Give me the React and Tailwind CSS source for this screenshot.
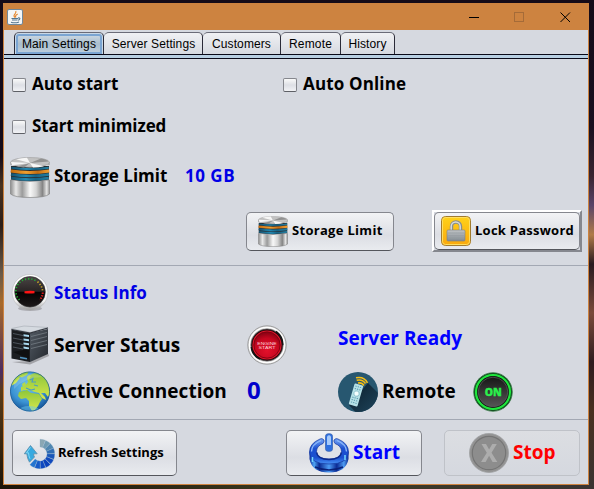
import React from 'react';

const heading = "font-['Open_Sans'] font-bold leading-none whitespace-nowrap";

function Checkbox() {
  return (
    <span className="block h-[14px] w-[14px] shrink-0 rounded-[2px] border border-[#85878d] border-b-[#5e6066] bg-linear-to-b from-[#fafafa] via-[#dddfe5] to-[#f1f2f5]" />
  );
}

function Option({ label, className }) {
  return (
    <label className="flex items-center gap-[6px]">
      <Checkbox />
      <span className={`${heading} relative -top-0.5 text-[17px] text-black ${className}`}>{label}</span>
    </label>
  );
}

function Tab({ label, width, active, className = '' }) {
  return (
    <div
      className={`h-[22px] shrink-0 rounded-t-[5px] border border-b-0 border-[#2b2b38] border-t-[#6b6c78] ${width} ${
        active ? 'bg-[#c9d8e6] p-px pb-0' : 'border-l-0 bg-linear-to-b from-[#f0f1f4] to-[#d6d9e0]'
      }`}
    >
      <div
        className={`flex h-full items-center justify-center whitespace-nowrap font-['Liberation_Sans'] text-[12px] leading-none text-black ${className} ${
          active
            ? 'rounded-t-[3px] border-2 border-[#7ba5d2] bg-linear-to-b from-[#c8d5e0] via-[#a9bdcd] to-[#bccddb]'
            : ''
        }`}
      >
        {label}
      </div>
    </div>
  );
}

function JavaIcon() {
  return (
    <svg className="h-4 w-4" viewBox="0 0 16 16">
      <rect x=".5" y=".5" width="15" height="15" rx="1.5" fill="#f3f5f6" stroke="#71889a" />
      <path d="M8.2 8.5C4.7 6 10 5 8.800 2M9 8.500C7.700 6.800 9.200 6 10.800 5" fill="none" stroke="#e5852b" strokeWidth="1.1" />
      <path d="M4.500 9.500h6.500M5 11h5.500M4 13.200q4 1.300 8-.3M11 9c2.600-.6 2.400 2 0 2.200" fill="none" stroke="#54758e" strokeWidth="1.1" />
    </svg>
  );
}

function Database({ id, className }) {
  return (
    <svg className={className} viewBox="0 0 40 41" preserveAspectRatio="none">
      <defs>
        <linearGradient id={`${id}m`}>
          <stop offset="0" stopColor="#8d8d8d" />
          <stop offset=".14" stopColor="#e8e8e8" />
          <stop offset=".3" stopColor="#9a9a9a" />
          <stop offset=".5" stopColor="#f8f8f8" />
          <stop offset=".66" stopColor="#d4d4d4" />
          <stop offset=".82" stopColor="#858585" />
          <stop offset=".93" stopColor="#e5e5e5" />
          <stop offset="1" stopColor="#909090" />
        </linearGradient>
        <linearGradient id={`${id}b`}>
          <stop offset="0" stopColor="#145170" />
          <stop offset=".4" stopColor="#2389b2" />
          <stop offset=".65" stopColor="#176385" />
          <stop offset="1" stopColor="#2480a3" />
        </linearGradient>
        <linearGradient id={`${id}o`}>
          <stop offset="0" stopColor="#c56a0c" />
          <stop offset=".4" stopColor="#f0a030" />
          <stop offset=".7" stopColor="#c46d12" />
          <stop offset="1" stopColor="#f2a133" />
        </linearGradient>
      </defs>
      <path d="M.5 23q19.500 3 39 0v14q-4 3.500-19.500 3.500T.5 37z" fill={`url(#${id}m)`} stroke="#858585" strokeWidth=".7" />
      <path d="M1 9h38v13.500q-19 3-38 0z" fill="#272d31" />
      <path d="M1.200 10.800q18.800 2.500 37.600 0" fill="none" stroke={`url(#${id}b)`} strokeWidth="2" />
      <path d="M.7 14q19.300 3 38.600 0" fill="none" stroke={`url(#${id}o)`} strokeWidth="2.800" />
      <path d="M.9 17.600q19.100 3 38.200 0M1.200 21q18.800 3 37.600 0" fill="none" stroke={`url(#${id}b)`} strokeWidth="2.500" />
      <path d="M.5 5v3q19.500 4.500 39 0V5z" fill={`url(#${id}m)`} />
      <ellipse cx="20" cy="5.300" rx="19.500" ry="4.800" fill="#c2c2c2" stroke="#a0a0a0" strokeWidth=".6" />
      <path d="M20 6 6 2.200Q12 .8 17 .7zM20 6l14 3.300q-5 1.200-11 1.200zM20 6 2 8.200 1 5z" fill="#f6f6f6" />
      <path d="M20 6 31 1.600q6 1 7.500 3zM20 6 7 9.600l7 .8z" fill="#919191" />
    </svg>
  );
}

function PadlockIcon() {
  return (
    <svg className="h-[30px] w-[30px] shrink-0" viewBox="0 0 30 30">
      <defs>
        <linearGradient id="gold" x2="0" y2="1">
          <stop stopColor="#ffd21a" />
          <stop offset="1" stopColor="#fba80c" />
        </linearGradient>
        <linearGradient id="steel" x2="0" y2="1">
          <stop stopColor="#bfc3c5" />
          <stop offset="1" stopColor="#838b92" />
        </linearGradient>
      </defs>
      <rect x=".5" y=".5" width="29" height="29" rx="4" fill="url(#gold)" stroke="#a17b2e" />
      <rect x="1.500" y="1.500" width="27" height="27" rx="3" fill="none" stroke="#ffdf62" />
      <path d="M10.500 15v-4.500a4.500 4.500 0 0 1 9 0V15" fill="none" stroke="#888d8e" strokeWidth="3.400" />
      <path d="M10.200 15v-4.500a4.500 4.500 0 0 1 9 0V15" fill="none" stroke="#d9dcd9" strokeWidth="1.500" />
      <rect x="6" y="14" width="18" height="11" rx="1" fill="url(#steel)" stroke="#81827e" strokeWidth=".6" />
      <path d="M7 17h16M7 19.500h16M7 22h16" stroke="#969da2" strokeWidth=".7" />
    </svg>
  );
}

function GaugeIcon() {
  return (
    <svg className="h-[38px] w-[38px] shrink-0" viewBox="0 0 38 38">
      <defs>
        <linearGradient id="rim" x2="0" y2="1">
          <stop stopColor="#fff" />
          <stop offset=".75" stopColor="#f1f1f1" />
          <stop offset="1" stopColor="#9a9a9a" />
        </linearGradient>
        <linearGradient id="dial" x2="0" y2="1">
          <stop stopColor="#4a4545" />
          <stop offset=".48" stopColor="#2a2525" />
          <stop offset=".52" stopColor="#050404" />
          <stop offset="1" stopColor="#1e1919" />
        </linearGradient>
      </defs>
      <ellipse cx="19" cy="34.500" rx="12" ry="2.500" fill="#8f9095" opacity=".6" />
      <circle cx="19" cy="18.300" r="17.900" fill="url(#rim)" stroke="#b0b0b3" strokeWidth=".5" />
      <circle cx="19" cy="17.800" r="15.300" fill="url(#dial)" stroke="#333" strokeWidth=".6" />
      <path d="M8.500 26A13 12.500 0 0 1 25.500 7.200" fill="none" stroke="#25ac35" strokeWidth="1.700" strokeDasharray="1.300 1.900" />
      <path d="M26.500 7.700Q31.500 12 31.700 18" fill="none" stroke="#c9a525" strokeWidth="1.700" strokeDasharray="1.300 1.700" />
      <path d="M31.700 18.500q0 4-3 7.500" fill="none" stroke="#f02020" strokeWidth="2" strokeDasharray="1.300 1.400" />
      <path d="M13.500 17.300q5-1 10-.2v2.200q-5 .5-10 0z" fill="#ff1414" />
    </svg>
  );
}

function ServerIcon() {
  return (
    <svg className="h-10 w-10 shrink-0" viewBox="0 0 40 40">
      <defs>
        <linearGradient id="side" x2="1" y2="1">
          <stop stopColor="#535b64" />
          <stop offset="1" stopColor="#24282e" />
        </linearGradient>
      </defs>
      <path d="M18 36 38 28l1 3-19 8.500L2 37z" fill="#a2a3a8" />
      <path d="M1.500 4.500 20 8v29L1.500 33.500z" fill="#1b1d21" />
      <path d="M20 8 38 4v25l-18 8z" fill="url(#side)" />
      <path d="M1.500 3.500 14 1l24 1.500L20 7.500z" fill="#d5dae0" stroke="#aab0b8" strokeWidth=".7" />
      <path d="m1.500 4.500 18.500 3.700 18-5.200" fill="none" stroke="#34383f" strokeWidth="1.200" />
      <path d="M3 8.500 13 10.500M3 13l10 2M3 17.500l10 2M3 22l10 2" stroke="#4c535c" strokeWidth="1" />
      <path d="m21 11.500 16-4M21 15.500l16-4M21 19.500l16-4M21 23.500l16-4" stroke="#7d858d" strokeWidth=".7" />
      <path d="m13.500 9.300 5.500.8v2l-5.500-.8zM13.500 13.400l5.500.8v2l-5.500-.8zM13.500 17.500l5.500.8v2l-5.500-.8zM13.500 21.600l5.500.8v2l-5.500-.8z" fill="#a9d8ef" />
      <path d="M3 27 19 24v10z" fill="#0a0b0d" opacity=".7" />
      <path d="m10 32.500 7 1.300" stroke="#5295c2" strokeWidth="1.500" />
    </svg>
  );
}

function GlobeIcon() {
  return (
    <svg className="h-[41px] w-10 shrink-0" viewBox="0 0 40 41">
      <defs>
        <radialGradient id="sea" cx=".45" cy=".35" r=".65">
          <stop stopColor="#6fc3ec" />
          <stop offset=".65" stopColor="#3b93d3" />
          <stop offset="1" stopColor="#145398" />
        </radialGradient>
        <linearGradient id="land" x2="0" y2="1">
          <stop stopColor="#8dc63a" />
          <stop offset="1" stopColor="#d7e84c" />
        </linearGradient>
        <clipPath id="sphere"><circle cx="20" cy="20.500" r="20" /></clipPath>
      </defs>
      <g clipPath="url(#sphere)">
        <circle cx="20" cy="20.500" r="20" fill="url(#sea)" />
        <path d="M12 1.500 19 0l-2 4-5 2.500-4-1zM3 9l5-4 2 2-4 5-5 3z" fill="url(#land)" />
        <path d="M20 4q9-6 18 6l2 12-2 4-3-4-4 0 4 4 1 3-4-2-3-5-4-1-3-1-3-1-5 0-3 1 0-4 4-1 3-4-1-3z" fill="url(#land)" />
        <path d="m9 21 8-2 4 3 8 1 3 5-2 3-2 4-3 4-3 1-3-5v-5l-3-3-5 1-3-3z" fill="url(#land)" />
        <path d="M12 13l3-2 1 3-3 3zM17 6l2-2 2 1-3 5z" fill="#b2d94a" />
        <path d="m20 9 3-2-1 4h4M16 17l5 2 4-1M24 14l4 1" fill="none" stroke="#4f9dbd" strokeWidth="1.200" />
        <ellipse cx="19" cy="39" rx="10" ry="4" fill="#68c8ef" opacity=".5" />
        <path d="M4 12Q14-3 33 6 15 6 4 18z" fill="#fff" opacity=".16" />
      </g>
      <circle cx="20" cy="20.500" r="19.600" fill="none" stroke="#1f5c93" strokeWidth=".7" />
    </svg>
  );
}

function EngineIcon() {
  return (
    <svg className="h-10 w-10 shrink-0" viewBox="0 0 40 40">
      <defs>
        <radialGradient id="red" cx=".5" cy=".7" r=".65">
          <stop stopColor="#e3112b" />
          <stop offset=".7" stopColor="#c5061f" />
          <stop offset="1" stopColor="#8f0315" />
        </radialGradient>
      </defs>
      <circle cx="20" cy="20" r="19.200" fill="#d5d5d5" stroke="#8f8f8f" strokeWidth=".8" />
      <circle cx="20" cy="20" r="17.600" fill="none" stroke="#fff" strokeWidth="1.300" />
      <circle cx="20" cy="20" r="16" fill="#210408" stroke="#575757" strokeWidth=".7" />
      <path d="M29 6.500Q36 12 35.500 20M4.500 22Q5 30 13 34" fill="none" stroke="#151515" strokeWidth="1.800" />
      <circle cx="20" cy="20" r="14.600" fill="#df182d" />
      <circle cx="20" cy="20" r="13.200" fill="url(#red)" stroke="#74000e" strokeWidth=".8" />
      <text x="20" y="19.800" textAnchor="middle" textLength="19.500" lengthAdjust="spacingAndGlyphs" fontFamily="Liberation Sans" fontSize="4.200" fill="#fbd2d6">ENGINE</text>
      <text x="20" y="24.300" textAnchor="middle" textLength="17" lengthAdjust="spacingAndGlyphs" fontFamily="Liberation Sans" fontSize="4.200" fill="#fbd2d6">START</text>
    </svg>
  );
}

function RemoteIcon() {
  return (
    <svg className="h-10 w-10 shrink-0" viewBox="0 0 40 40">
      <defs>
        <clipPath id="disc"><circle cx="20" cy="20" r="20" /></clipPath>
        <linearGradient id="shade" x2="1" y2="1">
          <stop stopColor="#0b1d2a" />
          <stop offset="1" stopColor="#214a63" />
        </linearGradient>
      </defs>
      <g clipPath="url(#disc)">
        <rect width="40" height="40" fill="#275770" />
        <path d="m30 11 14 14v20H22L11 33z" fill="url(#shade)" />
      </g>
      <g transform="rotate(16 18 23)">
        <rect x="13.500" y="12" width="9" height="22" rx="1" fill="#b6e1e7" />
        <path d="M15 14.500h6.200M15 17h6.200M15 26h6.200M15 28.500h6.200M15 31h6.200" stroke="#5b9bad" strokeWidth="1" strokeDasharray="1.300 1" />
        <circle cx="18.100" cy="21.500" r="2.700" fill="#f4ffff" stroke="#65a7b7" strokeWidth=".6" />
      </g>
      <path d="M20 11q4-.7 6 2.500M18.700 8.300q5.500-1.500 8.800 3.200M18 5.800q8-1.700 11.500 5" fill="none" stroke="#f6be13" strokeWidth="1.600" />
    </svg>
  );
}

function OnIcon() {
  return (
    <svg className="h-10 w-10 shrink-0" viewBox="0 0 40 40">
      <defs>
        <linearGradient id="onface" x2="0" y2="1">
          <stop stopColor="#171717" />
          <stop offset="1" stopColor="#555" />
        </linearGradient>
      </defs>
      <circle cx="20" cy="20" r="19.300" fill="#0b4a18" stroke="#3f7d4c" strokeWidth=".8" />
      <circle cx="20" cy="20" r="17" fill="#111" stroke="#1fe53d" strokeWidth="2.200" />
      <circle cx="20" cy="20" r="14.800" fill="url(#onface)" stroke="#606060" strokeWidth=".7" />
      <text x="20.300" y="23.800" textAnchor="middle" textLength="17" lengthAdjust="spacingAndGlyphs" fontFamily="Open Sans" fontWeight="800" fontSize="10.500" fill="#2af04b" stroke="#2af04b" strokeWidth=".3">ON</text>
    </svg>
  );
}

function RefreshIcon() {
  const shades = ['#8aa7b3', '#6f9ab1', '#4f86b0', '#2f6cb4', '#1a57ba', '#1049bd', '#0c42bb', '#0e48c0', '#155ac8', '#2274d0'];
  return (
    <svg className="h-[31px] w-[31px] shrink-0" viewBox="0 0 31 31">
      {shades.map((fill, i) => (
        <path
          key={fill}
          d="M0-14.700A14.700 14.700 0 0 1 5.270-13.720L2.510-6.540A7 7 0 0 0 0-7z"
          transform={`translate(16 16) rotate(${i * 22.500})`}
          fill={fill}
          stroke="#7ea6c6"
          strokeWidth=".25"
        />
      ))}
      <path d="M6.500 7.500.3 15.800h2.500q.4 5 2.700 8.400l5-5.200q-1-1.500-.8-3.200h3.500z" fill="#36a9e0" stroke="#5b8ca9" strokeWidth=".8" />
      <path d="m6.500 9.300-4 5.500h2q.2 3 1.500 6" fill="none" stroke="#8adcf4" strokeWidth=".9" />
    </svg>
  );
}

function PowerIcon() {
  return (
    <svg className="h-10 w-10 shrink-0" viewBox="0 0 40 40">
      <defs>
        <linearGradient id="blue" x2="0" y2="1">
          <stop stopColor="#7aa9f7" />
          <stop offset=".4" stopColor="#1b4fd0" />
          <stop offset=".75" stopColor="#1a50cf" />
          <stop offset="1" stopColor="#4a93f6" />
        </linearGradient>
        <linearGradient id="wall">
          <stop stopColor="#0b2c9b" />
          <stop offset=".12" stopColor="#4fa6f5" />
          <stop offset=".25" stopColor="#0a2a92" />
          <stop offset=".5" stopColor="#4c9cf5" />
          <stop offset=".7" stopColor="#0b2a95" />
          <stop offset=".88" stopColor="#4d9cf3" />
          <stop offset="1" stopColor="#0b2a91" />
        </linearGradient>
      </defs>
      <ellipse cx="20" cy="18.500" rx="13.500" ry="9" fill="#dfe2e8" />
      <path d="M.5 18v8Q3 39.500 20 39.500T39.500 26v-8Q37 30 20 30T.5 18z" fill="url(#wall)" />
      <path
        d="M11 6Q.5 10.500.5 19 .5 31 20 31t19.500-12Q39.500 10.500 29 6q-2-1.200-4 1-.5 2 1 3.500 6.500 2.500 6.500 8 0 7.500-12.500 7.500T7.500 18.500q0-5.500 6.500-8 1.500-1.500 1-3.500-2-2.200-4-1z"
        fill="url(#blue)"
        stroke="#12379c"
        strokeWidth=".7"
      />
      <path d="M12 7.500Q2.500 11.500 2.500 18.500M28 7.500q9.500 4 9.500 11" fill="none" stroke="#8fbcfb" strokeWidth="1.300" />
      <path d="M7.500 19.500Q9 26.500 20 26.500t12.500-7" fill="none" stroke="#0d2c8e" strokeWidth="1.400" />
      <rect x="16.500" y=".8" width="7" height="17.500" rx="2.500" fill="#2e6fdf" stroke="#3d67b3" strokeWidth=".8" />
      <path d="M18 3.500q2-2.500 4 0V12h-4z" fill="#a6cafa" />
      <path d="M3.500 24v5M36 22v5" stroke="#75d7ff" strokeWidth="1.500" />
      <path d="M6 34q14 6 28 0" fill="none" stroke="#0a2178" strokeWidth="1.600" />
    </svg>
  );
}

function StopIcon() {
  return (
    <svg className="h-10 w-10 shrink-0" viewBox="0 0 40 40">
      <circle cx="20" cy="20" r="19.500" fill="#939393" stroke="#a0a1a3" strokeWidth=".8" />
      <circle cx="20" cy="20" r="16.700" fill="#8d8d8d" stroke="#757575" strokeWidth="1.200" />
      <path d="m12.500 11 5.300 8.700L12 29h4.600l3.500-6.200 3.500 6.200h4.700l-5.800-9.300 5.300-8.700h-4.500l-3.200 5.600-3.100-5.600z" fill="#adadad" />
    </svg>
  );
}

function Button({ size, icon, children, disabled }) {
  return (
    <button
      className={`flex shrink-0 items-center rounded-[5px] border ${size} ${
        disabled
          ? 'border-[#bfc2c8] bg-linear-to-b from-[#dcdee2] to-[#d5d8df]'
          : 'border-[#85878e] border-b-[#54565c] bg-linear-to-b from-[#f2f3f5] via-[#dcdee4] via-60% to-[#e9ebef]'
      }`}
    >
      {icon}
      {children}
    </button>
  );
}

function TitleBar() {
  return (
    <header className="flex h-[26px] shrink-0 items-center bg-[#cd8340] pb-px pl-[3px]">
      <JavaIcon />
      <svg className="ml-auto mr-[17px] h-[12px] w-[102px]" viewBox="0 0 102 12" fill="none" shapeRendering="crispEdges">
        <path d="M0 6.500h10" stroke="#000" />
        <rect x="45.500" y="1.500" width="9" height="9" stroke="#a56b38" />
        <path d="m91.500 1.500 9.500 9.500m0-9.500-9.500 9.500" stroke="#000" shapeRendering="auto" />
      </svg>
    </header>
  );
}

export default function App() {
  return (
    <div className="flex h-[489px] w-[594px] overflow-hidden bg-linear-to-r from-[#1c1408] via-[#3c3b20] to-[#3a3432]">
      <div className="w-[3px] bg-[linear-gradient(to_bottom,#150b18_0,#150b18_32%,#4a3320_38%,#2c1d16_46%,#6a5a48_56%,#a86a2a_62%,#4c2c60_76%,#5a3c18_80%,#1c1408_100%)]" />
      <div className="h-[485px] border-t-[3px] border-[#150b18]">
        <main className="flex h-[482px] w-[586px] flex-col border border-[#cd8340] bg-[#d6d9e0]">
          <TitleBar />

          <nav className="flex h-[25px] shrink-0 items-end border-b border-[#090918] pl-[10px]">
            <Tab label="Main Settings" width="w-[90px]" active className="tracking-[0.1px]" />
            <Tab label="Server Settings" width="w-[99px]" className="pl-px tracking-[0.1px]" />
            <Tab label="Customers" width="w-[78px]" className="tracking-[0.1px]" />
            <Tab label="Remote" width="w-[60px]" className="tracking-[0.2px]" />
            <Tab label="History" width="w-[54px]" className="tracking-[0.1px]" />
          </nav>
          <div className="h-1 shrink-0 border-b border-[#090918] bg-[#b8cfe2]" />

          <section className="h-[207px] shrink-0 border-b border-[#a3a8b3] pl-2">
            <div className="grid h-[52px] grid-cols-[271px_1fr] items-center">
              <Option label="Auto start" className="" />
              <Option label="Auto Online" className="tracking-[0.15px]" />
            </div>
            <div className="flex h-8 items-center">
              <Option label="Start minimized" className="tracking-[-0.1px]" />
            </div>
            <div className="-ml-0.5 mt-[14px] flex h-[41px] items-center">
              <Database id="storage" className="h-[41px] w-10 shrink-0" />
              <span className={`${heading} relative -top-0.5 ml-1 w-[131px] text-[17px]`}>Storage Limit</span>
              <span className={`${heading} relative -top-0.5 text-[17px] tracking-[0.5px] text-[#0000e6]`}>10 GB</span>
            </div>
            <div className="mt-[12px] flex items-center pl-[234px]">
              <Button
                size="h-[39px] w-[148px] gap-1 pl-[11px]"
                icon={<Database id="limit" className="h-[31px] w-[30px] shrink-0" />}
              >
                <span className={`${heading} relative -top-px text-[13px] tracking-[0.3px]`}>Storage Limit</span>
              </Button>
              <div className="ml-[38px] h-[42px] w-[150px] border-2 border-white border-r-[#85878e] border-b-[#85878e]">
                <Button size="h-[38px] w-[146px] gap-1 pl-[6px]" icon={<PadlockIcon />}>
                  <span className={`${heading} relative -top-px text-[13px] tracking-[0.25px]`}>Lock Password</span>
                </Button>
              </div>
            </div>
          </section>

          <section className="h-[154px] shrink-0 border-b border-[#a3a8b3] pl-1.5">
            <div className="flex h-[54px] items-center pl-px">
              <GaugeIcon />
              <span className={`${heading} relative -top-px ml-[5px] text-[17px] tracking-[0.05px] text-[#0000e6]`}>Status Info</span>
            </div>
            <div className="flex h-[50px] items-center">
              <ServerIcon />
              <span className={`${heading} ml-1 w-[193px] text-[19px]`}>Server Status</span>
              <EngineIcon />
              <span className={`${heading} relative -top-[7px] ml-[51px] text-[19px] text-[#0000ff]`}>Server Ready</span>
            </div>
            <div className="flex h-[43px] items-center">
              <GlobeIcon />
              <span className={`${heading} ml-1 w-[193px] text-[19px] tracking-[0.05px]`}>Active Connection</span>
              <span className={`${heading} relative -top-0.5 w-[91px] text-[24px] text-[#0000cc]`}>0</span>
              <RemoteIcon />
              <span className={`${heading} ml-1 w-[91px] text-[19px]`}>Remote</span>
              <OnIcon />
            </div>
          </section>

          <footer className="flex pl-2 pt-[10px]">
            <Button size="h-[46px] w-[165px] gap-[3px] pl-[11px]" icon={<RefreshIcon />}>
              <span className={`${heading} relative -top-px text-[13px]`}>Refresh Settings</span>
            </Button>
            <div className="ml-[109px] flex gap-[22px]">
              <Button size="h-[46px] w-[136px] gap-1 pl-[22px]" icon={<PowerIcon />}>
                <span className={`${heading} relative -top-px text-[19px] text-[#0000ff]`}>Start</span>
              </Button>
              <Button size="h-[46px] w-[136px] gap-1 pl-6" icon={<StopIcon />} disabled>
                <span className={`${heading} relative -top-px text-[19px] text-[#ff0000]`}>Stop</span>
              </Button>
            </div>
          </footer>
        </main>
      </div>
      <div className="flex-1 bg-[linear-gradient(to_bottom,#150b18_0,#1a1020_26%,#3a2430_36%,#5a4468_42%,#b07a48_48%,#2a1a20_54%,#7a4a3a_64%,#301c20_74%,#4a3020_84%,#3a3432_100%)]" />
    </div>
  );
}
